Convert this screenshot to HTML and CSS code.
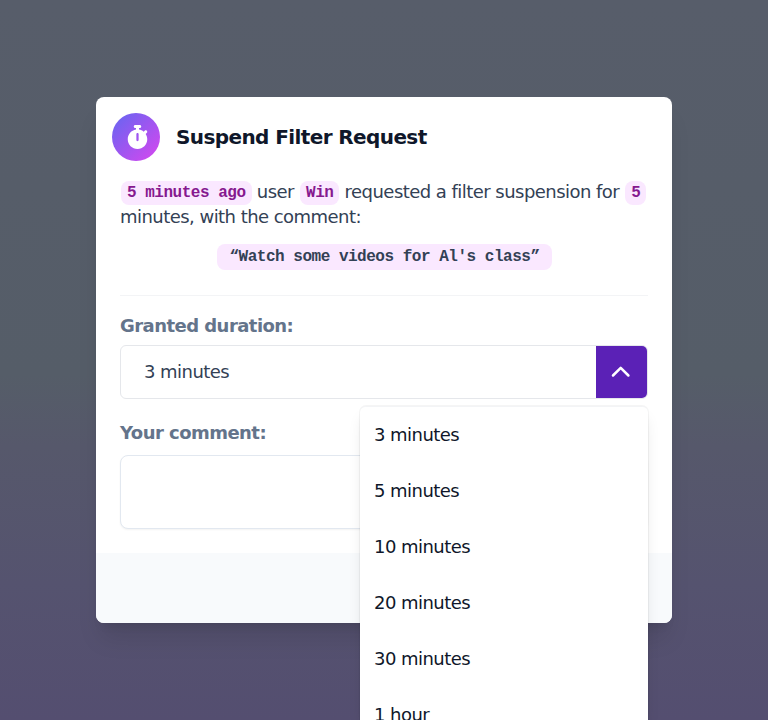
FILE: index.html
```html
<!DOCTYPE html>
<html lang="en">
<head>
<meta charset="utf-8">
<title>Suspend Filter Request</title>
<link rel="stylesheet" href="styles.css">
</head>
<body>
<main class="modal">
  <header class="head">
    <span class="badge">
      <svg width="21" height="24" viewBox="0 0 448 512" fill="currentColor"><path fill-rule="evenodd" d="M176 0c-17.700 0-32 14.300-32 32s14.300 32 32 32h16V98.400C92.300 113.800 16 200 16 304c0 114.900 93.100 208 208 208s208-93.100 208-208c0-41.800-12.300-80.700-33.500-113.200l24.100-24.100c12.500-12.500 12.500-32.800 0-45.300s-32.800-12.500-45.300 0L355.700 143c-28.100-23-62.200-38.800-99.700-44.600V64h16c17.700 0 32-14.300 32-32s-14.300-32-32-32H176zm72 192V320c0 13.300-10.700 24-24 24s-24-10.700-24-24V192c0-13.300 10.700-24 24-24s24 10.700 24 24z"/></svg>
    </span>
    <h2 class="title">Suspend Filter Request</h2>
  </header>
  <section class="body">
    <p class="summary"><span class="code">5 minutes ago</span> user <span class="code">Win</span> requested a filter suspension for <span class="code">5</span> minutes, with the comment:</p>
    <div class="quote-row"><span class="quote">“Watch some videos for Al's class”</span></div>
    <div class="divider"></div>
    <label class="label">Granted duration:</label>
    <div class="select-wrap">
      <div class="select">
        <span class="value">3 minutes</span>
        <span class="toggle"><svg width="24" height="24" viewBox="0 0 24 24" fill="none" stroke="currentColor" stroke-width="2.5" stroke-linecap="round" stroke-linejoin="round"><path d="M4 15.500l7.700-7.700 7.700 7.700"/></svg></span>
      </div>
      <ul class="menu">
        <li>3 minutes</li>
        <li>5 minutes</li>
        <li>10 minutes</li>
        <li>20 minutes</li>
        <li>30 minutes</li>
        <li>1 hour</li>
      </ul>
    </div>
    <label class="label comment-label">Your comment:</label>
    <textarea class="comment"></textarea>
  </section>
  <footer class="foot"></footer>
</main>
</body>
</html>
```
FILE: styles.css
```css
* { box-sizing: border-box; letter-spacing: -0.03em; }
html { height: 100%; overflow: hidden; }
body {
  margin: 0;
  height: 720px;
  overflow: hidden;
  display: flex;
  align-items: center;
  justify-content: center;
  background: linear-gradient(#575d6a 0%, #555d68 52%, #56586b 62%, #55536f 81%, #544e70 100%);
  font-family: "DejaVu Sans", sans-serif;
  font-size: 18px;
  color: #334155;
}
.modal {
  width: 576px;
  height: 526px;
  display: flex;
  flex-direction: column;
  background: #fff;
  border-radius: 8px;
  box-shadow: 0 20px 25px -5px rgba(0, 0, 0, 0.1), 0 8px 10px -6px rgba(0, 0, 0, 0.1);
}
.head { display: flex; align-items: center; gap: 16px; padding: 16px 16px 0; }
.badge {
  width: 48px;
  height: 48px;
  border-radius: 50%;
  display: flex;
  align-items: center;
  justify-content: center;
  padding-left: 2px;
  color: #fff;
  background: linear-gradient(to bottom right, #6366f1, #d946ef);
}
.title { margin: 0; font-size: 20px; line-height: 28px; font-weight: 700; color: #0f172a; }
.body { padding: 18px 24px 0; flex: 1; }
.summary { margin: 0; height: 50px; line-height: 25px; }
.code, .quote { font-family: "Liberation Mono", monospace; font-size: 16px; font-weight: 700; background: #fae8ff; }
.code { margin-left: 1px; padding: 3px 6px; line-height: 1; border-radius: 8px; color: #86198f; vertical-align: 1px; }
.quote-row { display: flex; justify-content: center; margin-top: 15px; }
.quote { line-height: 27px; height: 26px; margin-left: 1px; padding: 0 12.5px; border-radius: 8px; }
.divider { height: 1px; margin: 25px 0 17px; background: #f3f4f6; }
.label { display: block; line-height: 25px; font-weight: 700; color: #64748b; }
.select-wrap { position: relative; margin-top: 7px; }
.select { display: flex; height: 54px; border: 1px solid #e5e7eb; border-radius: 6px; overflow: hidden; }
.value { flex: 1; padding-left: 23px; line-height: 52px; }
.toggle { width: 51px; display: flex; align-items: center; justify-content: center; padding-right: 1px; color: #fff; background: #5b21b6; }
.menu {
  position: absolute;
  top: 61px;
  right: 0;
  width: 288px;
  height: 314px;
  overflow: hidden;
  margin: 0;
  padding: 0;
  list-style: none;
  border-top: 1px solid #f3f4f6;
  border-radius: 6px 6px 0 0;
  background: #fff;
  color: #0f172a;
  box-shadow: 0 0 0 1px rgba(0, 0, 0, 0.04), 0 10px 15px -3px rgba(0, 0, 0, 0.1), 0 4px 6px -4px rgba(0, 0, 0, 0.1);
}
.menu li { height: 56px; line-height: 56px; padding-left: 14px; }
.comment-label { margin-top: 21px; }
.comment {
  display: block;
  width: 100%;
  height: 74px;
  margin-top: 10px;
  border: 1px solid #e2e8f0;
  border-radius: 8px;
  resize: none;
  box-shadow: 0 1px 2px rgba(0, 0, 0, 0.05);
}
.foot { height: 70px; background: #f8fafc; border-radius: 0 0 8px 8px; }
```
